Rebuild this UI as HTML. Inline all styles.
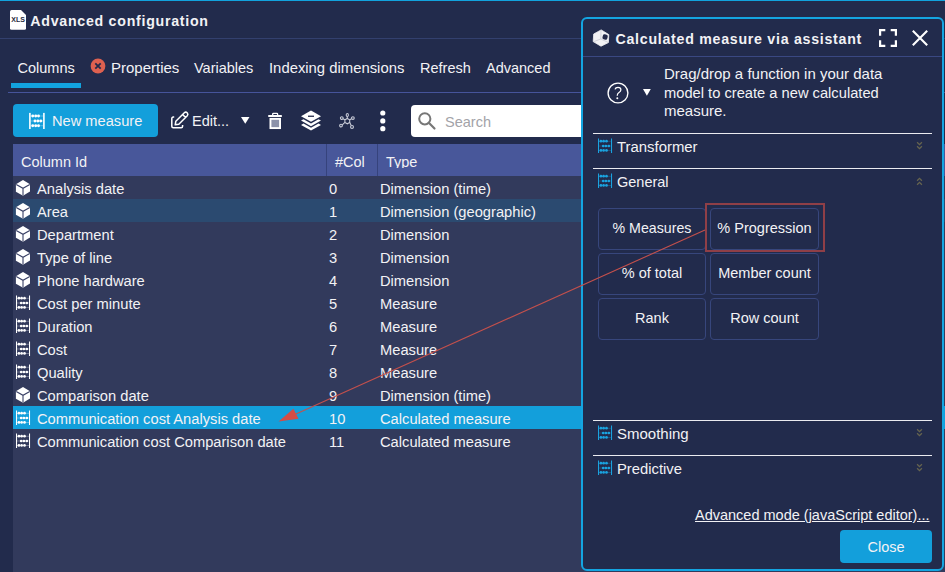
<!DOCTYPE html>
<html><head><meta charset="utf-8">
<style>
*{margin:0;padding:0;box-sizing:border-box}
html,body{width:945px;height:572px;overflow:hidden;background:#222b4c;font-family:"Liberation Sans",sans-serif;color:#f2f2f5;font-size:14.5px}
.a{position:absolute;white-space:nowrap}
.t{position:absolute;white-space:nowrap;line-height:20px}
svg{position:absolute;overflow:visible}
.btn{border:1px solid #37467c;border-radius:4px;text-align:center;line-height:38px}
</style></head><body>

<!-- top line -->
<div class="a" style="left:0;top:0;width:945px;height:1px;background:#12a3de"></div>
<!-- XLS icon -->
<svg style="left:10px;top:10px" width="16" height="20" viewBox="0 0 16 20">
<path d="M1.5 0 H11 L16 5 V18.3 Q16 19.8 14.5 19.8 H1.5 Q0 19.8 0 18.3 V1.5 Q0 0 1.5 0Z" fill="#fff"/>
<text x="8.1" y="12.4" font-family="Liberation Sans" font-weight="bold" font-size="7" fill="#262b40" text-anchor="middle">XLS</text>
</svg>
<div class="t" style="left:30.3px;top:10.9px;font-weight:bold;font-size:14.2px;letter-spacing:0.73px">Advanced configuration</div>
<div class="a" style="left:0;top:38px;width:945px;height:1px;background:#33406e"></div>

<!-- tabs -->
<div class="t" style="left:17.5px;top:58px">Columns</div>
<div class="a" style="left:11px;top:83px;width:70px;height:5px;background:#12a3de"></div>
<svg style="left:90px;top:58px" width="16" height="16" viewBox="0 0 16 16">
<circle cx="8" cy="8" r="7.4" fill="#de6150"/>
<path d="M5.3 5.3 L10.7 10.7 M10.7 5.3 L5.3 10.7" stroke="#232a4a" stroke-width="1.8"/>
</svg>
<div class="t" style="left:111px;top:58px;font-size:15px">Properties</div>
<div class="t" style="left:194px;top:58px">Variables</div>
<div class="t" style="left:269px;top:58px;font-size:14.85px">Indexing dimensions</div>
<div class="t" style="left:420px;top:58px">Refresh</div>
<div class="t" style="left:486px;top:58px">Advanced</div>
<div class="a" style="left:8px;top:92px;width:937px;height:1px;background:#46549a"></div>

<!-- toolbar -->
<div class="a" style="left:13px;top:104px;width:145px;height:33px;background:#139fdb;border-radius:4px"></div>
<svg style="left:26px;top:110px" width="22" height="22" viewBox="0 0 22 22"><g fill="#fff">
<rect x="3.1" y="2.9" width="1.6" height="16.1"/><rect x="17.1" y="2.9" width="1.6" height="16.1"/>
<rect x="4.7" y="5.65" width="12.4" height="0.7" opacity=".45"/><rect x="4.7" y="10.65" width="12.4" height="0.7" opacity=".45"/><rect x="4.7" y="15.45" width="12.4" height="0.7" opacity=".45"/>
<circle cx="6.7" cy="6" r="1.45"/><circle cx="9.7" cy="6" r="1.45"/><circle cx="12.5" cy="6" r="1.45"/>
<circle cx="9" cy="11" r="1.45"/><circle cx="11.9" cy="11" r="1.45"/><circle cx="14.8" cy="11" r="1.45"/>
<circle cx="6.7" cy="15.8" r="1.45"/><circle cx="9.7" cy="15.8" r="1.45"/><circle cx="12.5" cy="15.8" r="1.45"/></g></svg>
<div class="t" style="left:52px;top:111px;font-size:14.65px">New measure</div>

<svg style="left:168px;top:110px" width="22" height="22" viewBox="0 0 22 22">
<path d="M6.2 7.1 H5.3 Q3.8 7.1 3.8 8.6 V16.2 Q3.8 17.7 5.3 17.7 H13.1 Q14.6 17.7 14.6 16.2 V15" fill="none" stroke="#fff" stroke-width="1.5"/>
<path d="M7.2 14.8 L7.84 11.2 L16.32 2.72 A2.1 2.1 0 0 1 19.28 5.68 L10.8 14.16 Z M14.6 4.5 L17.5 7.4" fill="none" stroke="#fff" stroke-width="1.5" stroke-linejoin="round"/>
</svg>
<div class="t" style="left:192px;top:111px">Edit...</div>
<svg style="left:241px;top:117px" width="9" height="7" viewBox="0 0 9 7"><path d="M0 0 H8.5 L4.25 6.8Z" fill="#fff"/></svg>

<svg style="left:264px;top:108px" width="24" height="24" viewBox="0 0 24 24">
<rect x="4.2" y="7.1" width="13.7" height="1.9" rx="0.5" fill="#fff"/>
<path d="M8.7 7.3 V6 Q8.7 5.3 9.4 5.3 H12.9 Q13.6 5.3 13.6 6 V7.3" fill="none" stroke="#fff" stroke-width="1.3"/>
<rect x="6.45" y="10.85" width="9.6" height="9.25" fill="#8c92aa" stroke="#fff" stroke-width="1.9"/>
</svg>

<svg style="left:300px;top:110px" width="22" height="22" viewBox="0 0 22 22">
<path d="M11 0.6 L21 6.2 L11 11.8 L1 6.2Z" fill="#fff"/>
<rect x="8" y="5.6" width="6" height="1.3" fill="#232a4a"/>
<path d="M1 10.6 L3.5 9.2 L11 13.4 L18.5 9.2 L21 10.6 L11 16.2Z" fill="#fff"/>
<path d="M1 15 L3.5 13.6 L11 17.8 L18.5 13.6 L21 15 L11 20.6Z" fill="#fff"/>
</svg>

<svg style="left:339px;top:113px" width="16" height="16" viewBox="0 0 16 16">
<g fill="none" stroke="#c9ccd8" stroke-width="1.1">
<path d="M8.3 5.4 L10.7 6.8 V9.4 L8.3 10.8 L5.9 9.4 V6.8Z"/>
<path d="M8.3 5.4 V3.4 M10.7 6.8 L12.6 5.8 M5.9 6.8 L4 5.8 M5.9 9.4 L3.3 11.8 M10.7 9.4 L12.2 12.6"/>
<ellipse cx="8.3" cy="2" rx="1.1" ry="1.45"/><circle cx="13.9" cy="5.1" r="1.35"/><circle cx="2.8" cy="5.1" r="1.35"/><circle cx="2" cy="12.6" r="1.35"/><circle cx="13" cy="13.9" r="1.45"/>
</g></svg>

<svg style="left:380px;top:110px" width="6" height="22" viewBox="0 0 6 22">
<circle cx="2.8" cy="3" r="2.6" fill="#fff"/><circle cx="2.8" cy="10.9" r="2.6" fill="#fff"/><circle cx="2.8" cy="18.7" r="2.6" fill="#fff"/>
</svg>

<div class="a" style="left:411px;top:105px;width:200px;height:32px;background:#fff;border-radius:4px"></div>
<svg style="left:418px;top:112px" width="18" height="18" viewBox="0 0 18 18">
<circle cx="6.8" cy="6.8" r="5.6" fill="none" stroke="#777" stroke-width="2"/>
<path d="M10.8 10.8 L16.5 16.5" stroke="#777" stroke-width="2.2" stroke-linecap="round"/>
</svg>
<div class="t" style="left:445px;top:112px;color:#a3a3a8">Search</div>

<!-- table -->
<div class="a" style="left:13px;top:144px;width:932px;height:428px;background:#323a5c"></div>
<div class="a" style="left:13px;top:144px;width:932px;height:32px;background:#48579a"></div>
<div class="a" style="left:326px;top:144px;width:1px;height:32px;background:#36437c"></div>
<div class="a" style="left:377px;top:144px;width:1px;height:32px;background:#36437c"></div>
<div class="t" style="left:21px;top:152px">Column Id</div>
<div class="t" style="left:335px;top:152px">#Col</div>
<div class="a" style="left:380px;top:144px;width:190px;height:23.6px;overflow:hidden"><div class="t" style="left:6px;top:8px">Type</div></div>

<div class="a" style="left:13px;top:199px;width:932px;height:23px;background:#2b4a70"></div>
<div class="a" style="left:13px;top:406px;width:932px;height:23px;background:#139fdb"></div>

<svg style="left:15px;top:179px" width="16" height="17" viewBox="0 0 16 17"><path d="M8 0.9 L15 5.2 V12.6 L8 16.8 L0.9 12.7 V5.3Z" fill="#fff"/>
<path d="M1.2 5.4 L8 9.3 L14.8 5.4 M8 9.3 V16.6" fill="none" stroke="#3a4166" stroke-width="1.1"/></svg>
<div class="t" style="left:37px;top:179px;font-size:14.7px">Analysis date</div>
<div class="t" style="left:329px;top:179px;font-size:14.7px">0</div>
<div class="t" style="left:380px;top:179px;font-size:14.7px">Dimension (time)</div>
<svg style="left:15px;top:202px" width="16" height="17" viewBox="0 0 16 17"><path d="M8 0.9 L15 5.2 V12.6 L8 16.8 L0.9 12.7 V5.3Z" fill="#fff"/>
<path d="M1.2 5.4 L8 9.3 L14.8 5.4 M8 9.3 V16.6" fill="none" stroke="#3a4166" stroke-width="1.1"/></svg>
<div class="t" style="left:37px;top:202px;font-size:14.7px">Area</div>
<div class="t" style="left:329px;top:202px;font-size:14.7px">1</div>
<div class="t" style="left:380px;top:202px;font-size:14.7px">Dimension (geographic)</div>
<svg style="left:15px;top:225px" width="16" height="17" viewBox="0 0 16 17"><path d="M8 0.9 L15 5.2 V12.6 L8 16.8 L0.9 12.7 V5.3Z" fill="#fff"/>
<path d="M1.2 5.4 L8 9.3 L14.8 5.4 M8 9.3 V16.6" fill="none" stroke="#3a4166" stroke-width="1.1"/></svg>
<div class="t" style="left:37px;top:225px;font-size:14.7px">Department</div>
<div class="t" style="left:329px;top:225px;font-size:14.7px">2</div>
<div class="t" style="left:380px;top:225px;font-size:14.7px">Dimension</div>
<svg style="left:15px;top:248px" width="16" height="17" viewBox="0 0 16 17"><path d="M8 0.9 L15 5.2 V12.6 L8 16.8 L0.9 12.7 V5.3Z" fill="#fff"/>
<path d="M1.2 5.4 L8 9.3 L14.8 5.4 M8 9.3 V16.6" fill="none" stroke="#3a4166" stroke-width="1.1"/></svg>
<div class="t" style="left:37px;top:248px;font-size:14.7px">Type of line</div>
<div class="t" style="left:329px;top:248px;font-size:14.7px">3</div>
<div class="t" style="left:380px;top:248px;font-size:14.7px">Dimension</div>
<svg style="left:15px;top:271px" width="16" height="17" viewBox="0 0 16 17"><path d="M8 0.9 L15 5.2 V12.6 L8 16.8 L0.9 12.7 V5.3Z" fill="#fff"/>
<path d="M1.2 5.4 L8 9.3 L14.8 5.4 M8 9.3 V16.6" fill="none" stroke="#3a4166" stroke-width="1.1"/></svg>
<div class="t" style="left:37px;top:271px;font-size:14.7px">Phone hardware</div>
<div class="t" style="left:329px;top:271px;font-size:14.7px">4</div>
<div class="t" style="left:380px;top:271px;font-size:14.7px">Dimension</div>
<svg style="left:15px;top:295px;color:#fff" width="16" height="16" viewBox="0 0 16 16"><g fill="currentColor"><rect x="1" y="0.5" width="1.05" height="14.5"/><rect x="14" y="0.5" width="1.05" height="14.5"/>
<rect x="2" y="2.85" width="12" height="0.7" opacity=".45"/><rect x="2" y="7.65" width="12" height="0.7" opacity=".45"/><rect x="2" y="12.05" width="12" height="0.7" opacity=".45"/>
<circle cx="3.9" cy="3.2" r="1.35"/><circle cx="6.6" cy="3.2" r="1.35"/><circle cx="9.5" cy="3.2" r="1.35"/>
<circle cx="6.2" cy="8" r="1.35"/><circle cx="8.9" cy="8" r="1.35"/><circle cx="11.8" cy="8" r="1.35"/>
<circle cx="3.9" cy="12.4" r="1.35"/><circle cx="6.6" cy="12.4" r="1.35"/><circle cx="9.5" cy="12.4" r="1.35"/></g></svg>
<div class="t" style="left:37px;top:294px;font-size:14.7px">Cost per minute</div>
<div class="t" style="left:329px;top:294px;font-size:14.7px">5</div>
<div class="t" style="left:380px;top:294px;font-size:14.7px">Measure</div>
<svg style="left:15px;top:318px;color:#fff" width="16" height="16" viewBox="0 0 16 16"><g fill="currentColor"><rect x="1" y="0.5" width="1.05" height="14.5"/><rect x="14" y="0.5" width="1.05" height="14.5"/>
<rect x="2" y="2.85" width="12" height="0.7" opacity=".45"/><rect x="2" y="7.65" width="12" height="0.7" opacity=".45"/><rect x="2" y="12.05" width="12" height="0.7" opacity=".45"/>
<circle cx="3.9" cy="3.2" r="1.35"/><circle cx="6.6" cy="3.2" r="1.35"/><circle cx="9.5" cy="3.2" r="1.35"/>
<circle cx="6.2" cy="8" r="1.35"/><circle cx="8.9" cy="8" r="1.35"/><circle cx="11.8" cy="8" r="1.35"/>
<circle cx="3.9" cy="12.4" r="1.35"/><circle cx="6.6" cy="12.4" r="1.35"/><circle cx="9.5" cy="12.4" r="1.35"/></g></svg>
<div class="t" style="left:37px;top:317px;font-size:14.7px">Duration</div>
<div class="t" style="left:329px;top:317px;font-size:14.7px">6</div>
<div class="t" style="left:380px;top:317px;font-size:14.7px">Measure</div>
<svg style="left:15px;top:341px;color:#fff" width="16" height="16" viewBox="0 0 16 16"><g fill="currentColor"><rect x="1" y="0.5" width="1.05" height="14.5"/><rect x="14" y="0.5" width="1.05" height="14.5"/>
<rect x="2" y="2.85" width="12" height="0.7" opacity=".45"/><rect x="2" y="7.65" width="12" height="0.7" opacity=".45"/><rect x="2" y="12.05" width="12" height="0.7" opacity=".45"/>
<circle cx="3.9" cy="3.2" r="1.35"/><circle cx="6.6" cy="3.2" r="1.35"/><circle cx="9.5" cy="3.2" r="1.35"/>
<circle cx="6.2" cy="8" r="1.35"/><circle cx="8.9" cy="8" r="1.35"/><circle cx="11.8" cy="8" r="1.35"/>
<circle cx="3.9" cy="12.4" r="1.35"/><circle cx="6.6" cy="12.4" r="1.35"/><circle cx="9.5" cy="12.4" r="1.35"/></g></svg>
<div class="t" style="left:37px;top:340px;font-size:14.7px">Cost</div>
<div class="t" style="left:329px;top:340px;font-size:14.7px">7</div>
<div class="t" style="left:380px;top:340px;font-size:14.7px">Measure</div>
<svg style="left:15px;top:364px;color:#fff" width="16" height="16" viewBox="0 0 16 16"><g fill="currentColor"><rect x="1" y="0.5" width="1.05" height="14.5"/><rect x="14" y="0.5" width="1.05" height="14.5"/>
<rect x="2" y="2.85" width="12" height="0.7" opacity=".45"/><rect x="2" y="7.65" width="12" height="0.7" opacity=".45"/><rect x="2" y="12.05" width="12" height="0.7" opacity=".45"/>
<circle cx="3.9" cy="3.2" r="1.35"/><circle cx="6.6" cy="3.2" r="1.35"/><circle cx="9.5" cy="3.2" r="1.35"/>
<circle cx="6.2" cy="8" r="1.35"/><circle cx="8.9" cy="8" r="1.35"/><circle cx="11.8" cy="8" r="1.35"/>
<circle cx="3.9" cy="12.4" r="1.35"/><circle cx="6.6" cy="12.4" r="1.35"/><circle cx="9.5" cy="12.4" r="1.35"/></g></svg>
<div class="t" style="left:37px;top:363px;font-size:14.7px">Quality</div>
<div class="t" style="left:329px;top:363px;font-size:14.7px">8</div>
<div class="t" style="left:380px;top:363px;font-size:14.7px">Measure</div>
<svg style="left:15px;top:386px" width="16" height="17" viewBox="0 0 16 17"><path d="M8 0.9 L15 5.2 V12.6 L8 16.8 L0.9 12.7 V5.3Z" fill="#fff"/>
<path d="M1.2 5.4 L8 9.3 L14.8 5.4 M8 9.3 V16.6" fill="none" stroke="#3a4166" stroke-width="1.1"/></svg>
<div class="t" style="left:37px;top:386px;font-size:14.7px">Comparison date</div>
<div class="t" style="left:329px;top:386px;font-size:14.7px">9</div>
<div class="t" style="left:380px;top:386px;font-size:14.7px">Dimension (time)</div>
<svg style="left:15px;top:410px;color:#fff" width="16" height="16" viewBox="0 0 16 16"><g fill="currentColor"><rect x="1" y="0.5" width="1.05" height="14.5"/><rect x="14" y="0.5" width="1.05" height="14.5"/>
<rect x="2" y="2.85" width="12" height="0.7" opacity=".45"/><rect x="2" y="7.65" width="12" height="0.7" opacity=".45"/><rect x="2" y="12.05" width="12" height="0.7" opacity=".45"/>
<circle cx="3.9" cy="3.2" r="1.35"/><circle cx="6.6" cy="3.2" r="1.35"/><circle cx="9.5" cy="3.2" r="1.35"/>
<circle cx="6.2" cy="8" r="1.35"/><circle cx="8.9" cy="8" r="1.35"/><circle cx="11.8" cy="8" r="1.35"/>
<circle cx="3.9" cy="12.4" r="1.35"/><circle cx="6.6" cy="12.4" r="1.35"/><circle cx="9.5" cy="12.4" r="1.35"/></g></svg>
<div class="t" style="left:37px;top:409px;font-size:14.7px">Communication cost Analysis date</div>
<div class="t" style="left:329px;top:409px;font-size:14.7px">10</div>
<div class="t" style="left:380px;top:409px;font-size:14.7px">Calculated measure</div>
<svg style="left:15px;top:433px;color:#fff" width="16" height="16" viewBox="0 0 16 16"><g fill="currentColor"><rect x="1" y="0.5" width="1.05" height="14.5"/><rect x="14" y="0.5" width="1.05" height="14.5"/>
<rect x="2" y="2.85" width="12" height="0.7" opacity=".45"/><rect x="2" y="7.65" width="12" height="0.7" opacity=".45"/><rect x="2" y="12.05" width="12" height="0.7" opacity=".45"/>
<circle cx="3.9" cy="3.2" r="1.35"/><circle cx="6.6" cy="3.2" r="1.35"/><circle cx="9.5" cy="3.2" r="1.35"/>
<circle cx="6.2" cy="8" r="1.35"/><circle cx="8.9" cy="8" r="1.35"/><circle cx="11.8" cy="8" r="1.35"/>
<circle cx="3.9" cy="12.4" r="1.35"/><circle cx="6.6" cy="12.4" r="1.35"/><circle cx="9.5" cy="12.4" r="1.35"/></g></svg>
<div class="t" style="left:37px;top:432px;font-size:14.7px">Communication cost Comparison date</div>
<div class="t" style="left:329px;top:432px;font-size:14.7px">11</div>
<div class="t" style="left:380px;top:432px;font-size:14.7px">Calculated measure</div>

<!-- panel -->
<div class="a" style="left:581px;top:17px;width:363px;height:554px;background:#222b4c;border:2px solid #14a5e1;border-radius:6px"></div>


<!-- panel content -->
<svg style="left:592px;top:29px" width="18" height="18" viewBox="0 0 18 18">
<path d="M9.2 0.9 L16.8 5.6 L16.4 13.6 L9 17.2 L1.2 12.6 L1.7 5Z" fill="#f2f2f5" stroke="#f2f2f5" stroke-width="0.8" stroke-linejoin="round"/>
<path d="M9 1.6 L8.8 10 L1.8 12.6 M8.8 10 L16.2 13.4" fill="none" stroke="#c4c6d0" stroke-width="0.7"/>
<rect x="10.6" y="5.5" width="5" height="5" rx="1.6" transform="rotate(15 13.1 8)" fill="#232a4a"/>
</svg>
<div class="t" style="left:615.5px;top:28.9px;font-weight:bold;font-size:14.2px;letter-spacing:0.73px">Calculated measure via assistant</div>
<svg style="left:879px;top:29px" width="18" height="18" viewBox="0 0 18 18">
<path d="M1.1 6.7 V1.1 H6.3 M11.7 1.1 H16.9 V6.7 M16.9 11.3 V16.9 H11.7 M6.3 16.9 H1.1 V11.3" fill="none" stroke="#fff" stroke-width="2.2"/>
</svg>
<svg style="left:912px;top:30px" width="16" height="16" viewBox="0 0 16 16">
<path d="M0.8 0.8 L15.2 15.2 M15.2 0.8 L0.8 15.2" stroke="#fff" stroke-width="2.1"/>
</svg>
<div class="a" style="left:583px;top:56px;width:359px;height:1px;background:#3a4882"></div>

<svg style="left:607px;top:82px" width="22" height="22" viewBox="0 0 22 22">
<circle cx="11" cy="11" r="9.9" fill="none" stroke="#fff" stroke-width="1.35"/>
<path d="M8 7.3 Q8.5 5.3 11 5.3 Q13.9 5.3 13.9 7.8 Q13.9 9.4 12 10.5 Q10.3 11.5 10.3 13.3 V13.8" fill="none" stroke="#fff" stroke-width="1.25"/>
<circle cx="10.3" cy="16.2" r="1" fill="#fff"/>
</svg>
<svg style="left:643px;top:89px" width="8" height="7" viewBox="0 0 8 7"><path d="M0 0 H7.8 L3.9 6.8Z" fill="#fff"/></svg>
<div class="t" style="left:664px;top:64.2px;font-size:15px">Drag/drop a function in your data</div>
<div class="t" style="left:664px;top:83.1px;font-size:14.7px">model to create a new calculated</div>
<div class="t" style="left:664px;top:101.1px;font-size:15px">measure.</div>

<div class="a" style="left:593px;top:133px;width:339px;height:1px;background:#ebebf0"></div>
<svg style="left:597px;top:138px;color:#1aa3e0" width="16" height="16" viewBox="0 0 16 16"><g fill="currentColor"><rect x="1" y="0.5" width="1.05" height="14.5"/><rect x="14" y="0.5" width="1.05" height="14.5"/>
<rect x="2" y="2.85" width="12" height="0.7" opacity=".45"/><rect x="2" y="7.65" width="12" height="0.7" opacity=".45"/><rect x="2" y="12.05" width="12" height="0.7" opacity=".45"/>
<circle cx="3.9" cy="3.2" r="1.35"/><circle cx="6.6" cy="3.2" r="1.35"/><circle cx="9.5" cy="3.2" r="1.35"/>
<circle cx="6.2" cy="8" r="1.35"/><circle cx="8.9" cy="8" r="1.35"/><circle cx="11.8" cy="8" r="1.35"/>
<circle cx="3.9" cy="12.4" r="1.35"/><circle cx="6.6" cy="12.4" r="1.35"/><circle cx="9.5" cy="12.4" r="1.35"/></g></svg>
<div class="t" style="left:617px;top:137px;font-size:14.9px">Transformer</div>
<svg style="left:916px;top:141px" width="7" height="10" viewBox="0 0 7 10"><path d="M1.1 1.2 L3.5 3.6 L5.9 1.2 M1.1 5.2 L3.5 7.6 L5.9 5.2" fill="none" stroke="#66644f" stroke-width="1.3"/></svg>

<div class="a" style="left:593px;top:168px;width:339px;height:1px;background:#ebebf0"></div>
<svg style="left:597px;top:173px;color:#1aa3e0" width="16" height="16" viewBox="0 0 16 16"><g fill="currentColor"><rect x="1" y="0.5" width="1.05" height="14.5"/><rect x="14" y="0.5" width="1.05" height="14.5"/>
<rect x="2" y="2.85" width="12" height="0.7" opacity=".45"/><rect x="2" y="7.65" width="12" height="0.7" opacity=".45"/><rect x="2" y="12.05" width="12" height="0.7" opacity=".45"/>
<circle cx="3.9" cy="3.2" r="1.35"/><circle cx="6.6" cy="3.2" r="1.35"/><circle cx="9.5" cy="3.2" r="1.35"/>
<circle cx="6.2" cy="8" r="1.35"/><circle cx="8.9" cy="8" r="1.35"/><circle cx="11.8" cy="8" r="1.35"/>
<circle cx="3.9" cy="12.4" r="1.35"/><circle cx="6.6" cy="12.4" r="1.35"/><circle cx="9.5" cy="12.4" r="1.35"/></g></svg>
<div class="t" style="left:617px;top:172px;font-size:14.5px">General</div>
<svg style="left:916px;top:177px" width="7" height="10" viewBox="0 0 7 10"><path d="M1.1 3.8 L3.5 1.4 L5.9 3.8 M1.1 7.8 L3.5 5.4 L5.9 7.8" fill="none" stroke="#66644f" stroke-width="1.3"/></svg>

<div class="a btn" style="left:598px;top:208px;width:108px;height:42px;font-size:14.2px">% Measures</div>
<div class="a btn" style="left:710px;top:208px;width:109px;height:42px">% Progression</div>
<div class="a btn" style="left:598px;top:253px;width:108px;height:42px">% of total</div>
<div class="a btn" style="left:710px;top:253px;width:109px;height:42px">Member count</div>
<div class="a btn" style="left:598px;top:298px;width:108px;height:42px">Rank</div>
<div class="a btn" style="left:710px;top:298px;width:109px;height:42px">Row count</div>
<div class="a" style="left:705px;top:203px;width:120px;height:49px;border:2px solid #8f3f47;border-radius:0"></div>

<div class="a" style="left:593px;top:420px;width:339px;height:1px;background:#ebebf0"></div>
<svg style="left:597px;top:425px;color:#1aa3e0" width="16" height="16" viewBox="0 0 16 16"><g fill="currentColor"><rect x="1" y="0.5" width="1.05" height="14.5"/><rect x="14" y="0.5" width="1.05" height="14.5"/>
<rect x="2" y="2.85" width="12" height="0.7" opacity=".45"/><rect x="2" y="7.65" width="12" height="0.7" opacity=".45"/><rect x="2" y="12.05" width="12" height="0.7" opacity=".45"/>
<circle cx="3.9" cy="3.2" r="1.35"/><circle cx="6.6" cy="3.2" r="1.35"/><circle cx="9.5" cy="3.2" r="1.35"/>
<circle cx="6.2" cy="8" r="1.35"/><circle cx="8.9" cy="8" r="1.35"/><circle cx="11.8" cy="8" r="1.35"/>
<circle cx="3.9" cy="12.4" r="1.35"/><circle cx="6.6" cy="12.4" r="1.35"/><circle cx="9.5" cy="12.4" r="1.35"/></g></svg>
<div class="t" style="left:617px;top:424px;font-size:15px">Smoothing</div>
<svg style="left:916px;top:428px" width="7" height="10" viewBox="0 0 7 10"><path d="M1.1 1.2 L3.5 3.6 L5.9 1.2 M1.1 5.2 L3.5 7.6 L5.9 5.2" fill="none" stroke="#66644f" stroke-width="1.3"/></svg>

<div class="a" style="left:593px;top:455px;width:339px;height:1px;background:#ebebf0"></div>
<svg style="left:597px;top:460px;color:#1aa3e0" width="16" height="16" viewBox="0 0 16 16"><g fill="currentColor"><rect x="1" y="0.5" width="1.05" height="14.5"/><rect x="14" y="0.5" width="1.05" height="14.5"/>
<rect x="2" y="2.85" width="12" height="0.7" opacity=".45"/><rect x="2" y="7.65" width="12" height="0.7" opacity=".45"/><rect x="2" y="12.05" width="12" height="0.7" opacity=".45"/>
<circle cx="3.9" cy="3.2" r="1.35"/><circle cx="6.6" cy="3.2" r="1.35"/><circle cx="9.5" cy="3.2" r="1.35"/>
<circle cx="6.2" cy="8" r="1.35"/><circle cx="8.9" cy="8" r="1.35"/><circle cx="11.8" cy="8" r="1.35"/>
<circle cx="3.9" cy="12.4" r="1.35"/><circle cx="6.6" cy="12.4" r="1.35"/><circle cx="9.5" cy="12.4" r="1.35"/></g></svg>
<div class="t" style="left:617px;top:459.3px;font-size:14.8px">Predictive</div>
<svg style="left:916px;top:463px" width="7" height="10" viewBox="0 0 7 10"><path d="M1.1 1.2 L3.5 3.6 L5.9 1.2 M1.1 5.2 L3.5 7.6 L5.9 5.2" fill="none" stroke="#66644f" stroke-width="1.3"/></svg>

<div class="t" style="left:695px;top:504.8px;text-decoration:underline">Advanced mode (javaScript editor)...</div>
<div class="a" style="left:840px;top:530px;width:92px;height:33px;background:#139fdb;border-radius:4px;text-align:center;line-height:35px">Close</div>

<!-- arrow overlay -->
<svg style="left:0;top:0" width="945" height="572" viewBox="0 0 945 572">
<path d="M296 414 L705 230" stroke="#c4504c" stroke-width="1.1"/>
<path d="M278.6 421.5 L293.4 408.8 L298.5 418.8Z" fill="#d44d46"/>
</svg>
</body></html>
